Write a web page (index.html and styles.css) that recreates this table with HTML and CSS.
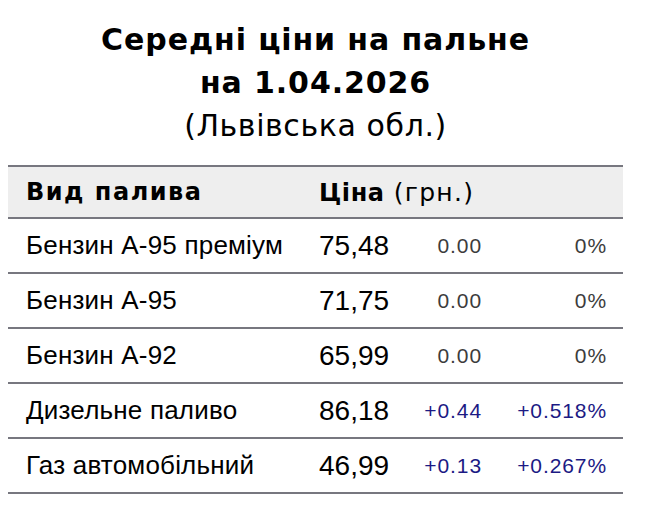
FILE: index.html
```html
<!DOCTYPE html>
<html lang="uk">
<head>
<meta charset="utf-8">
<title>Середні ціни на пальне</title>
<link rel="stylesheet" href="styles.css">
</head>
<body>
<div class="widget">
  <h1 class="title">
    <span class="title-main">Середні ціни на пальне</span>
    <span class="title-main">на 1.04.2026</span>
    <span class="title-sub">(Львівська обл.)</span>
  </h1>
  <table class="prices">
    <thead>
      <tr>
        <th class="c-name">Вид палива</th>
        <th class="c-price" colspan="3"><b>Ціна</b> <span class="unit">(грн.)</span></th>
      </tr>
    </thead>
    <tbody>
      <tr><td class="c-name">Бензин А-95 преміум</td><td class="c-price">75,48</td><td class="c-diff">0.00</td><td class="c-pct">0%</td></tr>
      <tr><td class="c-name">Бензин А-95</td><td class="c-price">71,75</td><td class="c-diff">0.00</td><td class="c-pct">0%</td></tr>
      <tr><td class="c-name">Бензин А-92</td><td class="c-price">65,99</td><td class="c-diff">0.00</td><td class="c-pct">0%</td></tr>
      <tr><td class="c-name">Дизельне паливо</td><td class="c-price">86,18</td><td class="c-diff up">+0.44</td><td class="c-pct up">+0.518%</td></tr>
      <tr><td class="c-name">Газ автомобільний</td><td class="c-price">46,99</td><td class="c-diff up">+0.13</td><td class="c-pct up">+0.267%</td></tr>
    </tbody>
  </table>
</div>
</body>
</html>
```
FILE: styles.css
```css
html, body {
  margin: 0;
  padding: 0;
  background: #fff;
}
body {
  padding: 8px;
  color: #000;
}
.widget {
  width: 615px;
}
.title {
  margin: 0;
  padding-top: 10px;
  display: flex;
  flex-direction: column;
  align-items: center;
  font-family: "DejaVu Sans", Verdana, sans-serif;
  font-size: 30px;
  line-height: 43px;
  height: 157px;
  box-sizing: border-box;
  letter-spacing: 0.9px;
}
.title-main {
  font-weight: bold;
}
.title-sub {
  font-weight: normal;
  letter-spacing: 0.6px;
}
.prices {
  width: 615px;
  border-collapse: collapse;
  font-family: "Liberation Sans", Arial, sans-serif;
}
.prices thead tr {
  background: #eeeeee;
  border-top: 2px solid #77777f;
  border-bottom: 2px solid #77777f;
}
.prices th {
  height: 50px;
  padding: 0;
  text-align: left;
  font-family: "DejaVu Sans", Verdana, sans-serif;
  font-weight: bold;
  font-size: 24px;
  letter-spacing: 1.5px;
  vertical-align: middle;
}
.prices th.c-name {
  padding-left: 18px;
}
.prices th .unit {
  font-weight: normal;
  font-size: 25px;
  letter-spacing: 1.3px;
}
.prices tbody tr {
  border-bottom: 2px solid #77777f;
}
.prices td {
  height: 53px;
  padding: 0;
  vertical-align: middle;
  font-size: 26px;
  letter-spacing: 0.2px;
}
.c-name {
  padding-left: 18px !important;
  width: 293px;
}
.prices td.c-price {
  font-size: 28px;
  width: 80px;
  letter-spacing: 0;
}
.prices th.c-price {
  font-size: 24px;
  letter-spacing: 0.6px;
}
.prices .c-diff {
  text-align: right;
  font-size: 21px;
  letter-spacing: 0.9px;
  color: #3c3c3c;
  width: 83px;
}
.prices .c-pct {
  text-align: right;
  font-size: 21px;
  letter-spacing: 0.9px;
  color: #3c3c3c;
  padding-right: 16px;
}
.prices .up {
  color: #1c1a84;
}
```
